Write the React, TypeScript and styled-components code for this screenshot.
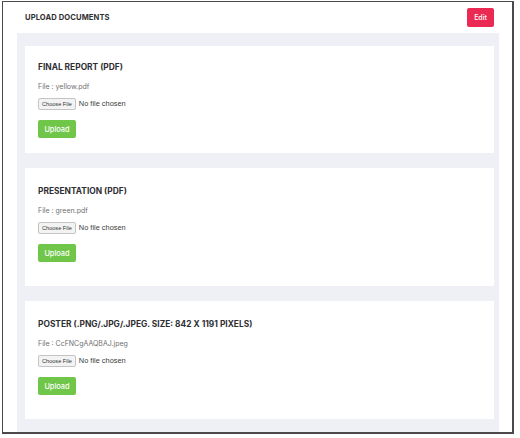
import React from "react";
import styled, { createGlobalStyle } from "styled-components";

const Global = createGlobalStyle`
  html, body { margin: 0; padding: 0; background: #ffffff; }
  body { font-family: Inter, "Noto Sans", sans-serif; }
`;

const Frame = styled.div`
  box-sizing: border-box;
  margin: 1px 0 0 2px;
  width: 512px;
  height: 433px;
  border: 1px solid #4a4a4a;
  border-right-width: 2px;
  border-bottom-width: 2px;
  overflow: hidden;
  background: #fff;
`;

const Header = styled.div`
  height: 31px;
  display: flex;
  align-items: center;
  justify-content: space-between;
  padding: 0 18px 0 22px;
`;

const PageTitle = styled.h1`
  margin: 0;
  font-size: 7.6px;
  font-weight: 700;
  color: #2f2f33;
  letter-spacing: 0.1px;
`;

const EditButton = styled.button`
  border: none;
  border-radius: 2px;
  background: #ea2a52;
  color: #fff;
  font-family: inherit;
  font-size: 7px;
  font-weight: 500;
  width: 27px;
  height: 19px;
  padding: 0;
  cursor: pointer;
`;

const Panel = styled.div`
  margin: 0 13px 0 14px;
  background: #eef0f6;
  padding: 13px 5px 13px 8px;
  display: flex;
  flex-direction: column;
  gap: 15px;
  min-height: 420px;
`;

const Card = styled.section<{ $compact?: boolean }>`
  background: #fff;
  padding: ${(p) => (p.$compact ? "15px 13px 15px" : "17px 13px 24px")};
  display: flex;
  flex-direction: column;
  align-items: flex-start;
`;

const CardTitle = styled.h2`
  margin: 0;
  font-size: 8.4px;
  line-height: 12px;
  font-weight: 700;
  color: #2e2e33;
`;

const FileName = styled.div`
  margin-top: 9px;
  font-size: 7px;
  line-height: 10px;
  color: #707070;
`;

const PickerRow = styled.div`
  margin-top: 6px;
  display: flex;
  align-items: center;
  gap: 3px;
  height: 11px;
`;

const ChooseButton = styled.span`
  display: inline-flex;
  align-items: center;
  height: 10px;
  padding: 0 3px;
  border: 1px solid #c4c4c4;
  border-radius: 2px;
  background: #f3f3f3;
  font-family: "Liberation Sans", Arial, sans-serif;
  font-size: 5.6px;
  color: #333;
`;

const NoFile = styled.span`
  font-family: "Liberation Sans", Arial, sans-serif;
  font-size: 7.4px;
  color: #3a3a3a;
`;

const UploadButton = styled.button`
  margin-top: 11px;
  border: none;
  border-radius: 2px;
  background: #6fc648;
  color: #fff;
  font-family: inherit;
  font-size: 7.4px;
  font-weight: 500;
  width: 38px;
  height: 18px;
  padding: 0;
  cursor: pointer;
`;

type Doc = { title: string; file: string; compact?: boolean };

const docs: Doc[] = [
  { title: "FINAL REPORT (PDF)", file: "yellow.pdf", compact: true },
  { title: "PRESENTATION (PDF)", file: "green.pdf" },
  { title: "POSTER (.PNG/.JPG/.JPEG. SIZE: 842 X 1191 PIXELS)", file: "CcFNCgAAQBAJ.jpeg" },
];

export default function App() {
  return (
    <>
      <Global />
      <Frame>
        <Header>
          <PageTitle>UPLOAD DOCUMENTS</PageTitle>
          <EditButton>Edit</EditButton>
        </Header>
        <Panel>
          {docs.map((d) => (
            <Card key={d.title} $compact={d.compact}>
              <CardTitle>{d.title}</CardTitle>
              <FileName>File : {d.file}</FileName>
              <PickerRow>
                <ChooseButton>Choose File</ChooseButton>
                <NoFile>No file chosen</NoFile>
              </PickerRow>
              <UploadButton>Upload</UploadButton>
            </Card>
          ))}
        </Panel>
      </Frame>
    </>
  );
}
